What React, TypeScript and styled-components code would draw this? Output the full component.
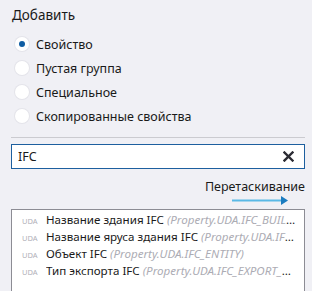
import React, { useState } from 'react'
import styled, { createGlobalStyle } from 'styled-components'

const Global = createGlobalStyle`
  body {
    margin: 0;
    background: #f0f0f5;
    font-family: "Noto Sans", "Open Sans", sans-serif;
    color: #1a1a1a;
  }
`

const options = ['Свойство', 'Пустая группа', 'Специальное', 'Скопированные свойства']

const rows = [
  { name: 'Название здания IFC', id: '(Property.UDA.IFC_BUILDING_NAME)' },
  { name: 'Название яруса здания IFC', id: '(Property.UDA.IFC_BUILDING_STOREY_NAME)' },
  { name: 'Объект IFC', id: '(Property.UDA.IFC_ENTITY)' },
  { name: 'Тип экспорта IFC', id: '(Property.UDA.IFC_EXPORT_TYPE)' },
]

const App = () => {
  const [selected, setSelected] = useState(0)
  const [query, setQuery] = useState('IFC')

  return (
    <>
      <Global />
      <Panel>
        <Title>Добавить</Title>
        <RadioList>
          {options.map((o, i) => (
            <RadioRow key={o} onClick={() => setSelected(i)}>
              <Radio checked={selected === i} />
              <span>{o}</span>
            </RadioRow>
          ))}
        </RadioList>
        <Divider />
        <SearchBox>
          <SearchInput value={query} onChange={(e) => setQuery(e.target.value)} />
          <ClearBtn onClick={() => setQuery('')}>
            <svg width="11" height="11" viewBox="0 0 11 11">
              <path d="M1.5 1.5 L9.5 9.5 M9.5 1.5 L1.5 9.5" stroke="#2b2b33" strokeWidth="2.4" strokeLinecap="square" />
            </svg>
          </ClearBtn>
        </SearchBox>
        <DragHint>
          <span>Перетаскивание</span>
          <svg width="56" height="9" viewBox="0 0 56 9">
            <line x1="0" y1="4.5" x2="50" y2="4.5" stroke="#5ab9e6" strokeWidth="2" />
            <path d="M49 0 L56 4.5 L49 9 Z" fill="#1b7cc0" />
          </svg>
        </DragHint>
        <ResultList>
          {rows.map((r) => (
            <ResultRow key={r.name}>
              <Tag>UDA</Tag>
              <Label>
                {r.name} <Ident>{r.id}</Ident>
              </Label>
            </ResultRow>
          ))}
        </ResultList>
      </Panel>
    </>
  )
}

export default App

const Panel = styled.div`
  width: 312px;
  height: 291px;
  box-sizing: border-box;
  padding: 5px 7px 0 11px;
  overflow: hidden;
  display: flex;
  flex-direction: column;
`
const Title = styled.div`
  font-size: 13.5px;
  line-height: 20px;
  padding-left: 1px;
`
const RadioList = styled.div`
  margin-top: 7px;
  display: flex;
  flex-direction: column;
`
const RadioRow = styled.label`
  display: flex;
  align-items: center;
  height: 24px;
  gap: 7px;
  font-size: 12.5px;
  padding-left: 4px;
  cursor: pointer;
`
const Radio = styled.span<{ checked: boolean }>`
  width: 14px;
  height: 14px;
  border-radius: 50%;
  background: #fff;
  box-shadow: 0 0 0 1px #e4e4ea;
  display: flex;
  align-items: center;
  justify-content: center;
  &::after {
    content: '';
    width: 6px;
    height: 6px;
    border-radius: 50%;
    background: ${({ checked }) => (checked ? '#0f5da3' : 'transparent')};
  }
`
const Divider = styled.div`
  margin-top: 9px;
  height: 1px;
  background: #cbcbd0;
`
const SearchBox = styled.div`
  margin-top: 6px;
  height: 25px;
  box-sizing: border-box;
  border: 1px solid #1d5f9f;
  background: #fff;
  display: flex;
  align-items: center;
  padding: 0 10px 0 6px;
`
const SearchInput = styled.input`
  flex: 1;
  border: none;
  outline: none;
  background: transparent;
  font-family: "Noto Sans", sans-serif;
  font-size: 12.5px;
  color: #1a1a1a;
  padding: 0;
`
const ClearBtn = styled.span`
  display: flex;
  cursor: pointer;
`
const DragHint = styled.div`
  margin-top: 10px;
  display: flex;
  flex-direction: column;
  align-items: flex-end;
  font-size: 12.5px;
  line-height: 16px;
  & svg {
    margin: 1px 17px 0 0;
  }
`
const ResultList = styled.div`
  margin-top: 4px;
  flex: 1;
  background: #fff;
  border: 1px solid #8c8c94;
  border-bottom: none;
  padding: 2px 8px 0 10px;
`
const ResultRow = styled.div`
  display: flex;
  align-items: baseline;
  height: 17px;
  font-size: 11.6px;
`
const Tag = styled.span`
  font-size: 7.5px;
  color: #b0b0b8;
  width: 24px;
  flex: none;
`
const Label = styled.span`
  flex: 1;
  min-width: 0;
  color: #1a1a1a;
  white-space: nowrap;
  overflow: hidden;
  text-overflow: ellipsis;
`
const Ident = styled.span`
  color: #acacb4;
  font-style: italic;
`
